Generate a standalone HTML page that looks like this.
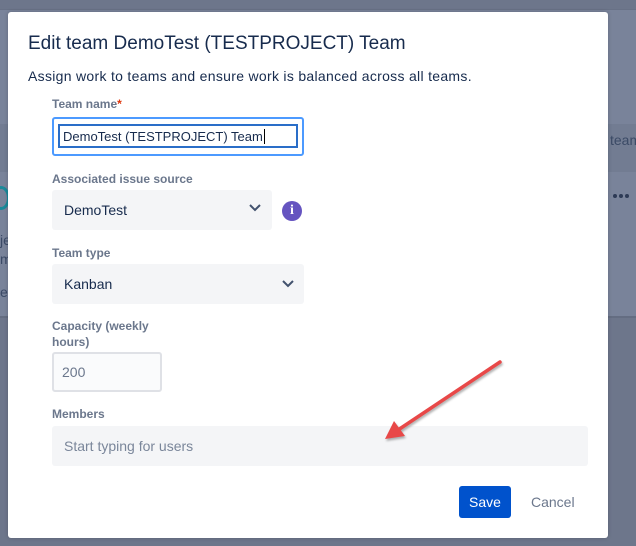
<!DOCTYPE html>
<html><head><meta charset="utf-8"><style>
*{margin:0;padding:0;box-sizing:border-box}
body{width:636px;height:546px;overflow:hidden;position:relative;background:#6d768b;font-family:"Liberation Sans",Arial,sans-serif}
.abs{position:absolute}
.lbl{position:absolute;left:52px;font-size:12px;font-weight:bold;color:#6b778c}
.sel{position:absolute;background:#f4f5f7;border-radius:3px;font-size:14px;color:#172b4d;padding-left:12px;display:flex;align-items:center}
</style></head><body>
<div class="abs" style="left:0;top:10px;width:636px;height:306px;background:#79839a"></div>
<div class="abs" style="left:0;top:9px;width:636px;height:1px;background:#687186"></div>
<div class="abs" style="left:0;top:124px;width:636px;height:48px;background:#727c92"></div>
<div class="abs" style="left:0;top:316px;width:636px;height:2px;background:#646d82"></div>
<div class="abs" style="left:610px;top:132px;font-size:14px;color:#3b4a66">team</div>
<div class="abs" style="left:613px;top:194px;width:4px;height:4px;border-radius:50%;background:#2d3a55;box-shadow:6px 0 #2d3a55,12px 0 #2d3a55"></div>
<div class="abs" style="left:-8px;top:186px;width:18px;height:24px;border-radius:50%;border:3px solid #1a8a9a"></div>
<div class="abs" style="left:0;top:232px;font-size:14px;color:#3b4a66">je</div>
<div class="abs" style="left:0;top:251px;font-size:14px;color:#3b4a66">m</div>
<div class="abs" style="left:0;top:284px;font-size:14px;color:#3b4a66">e</div>

<div class="abs" style="left:8px;top:12px;width:600px;height:526px;background:#fff;border-radius:3px;box-shadow:0 0 4px rgba(0,0,0,.2)"></div>
<div class="abs" style="left:28px;top:33px;font-size:19px;color:#172b4d">Edit team DemoTest (TESTPROJECT) Team</div>
<div class="abs" style="left:28px;top:68px;font-size:14px;color:#172b4d;letter-spacing:0.3px">Assign work to teams and ensure work is balanced across all teams.</div>

<div class="lbl" style="top:97px">Team name<span style="color:#de350b">*</span></div>
<div class="abs" style="left:52px;top:117px;width:252px;height:39px;border:2px solid #4c9aff;border-radius:3px;background:#fff"></div>
<div class="abs" style="left:58px;top:124px;width:240px;height:24px;border:2px solid #2a6ec8;font-size:13px;color:#172b4d;padding:2px 0 0 3px;line-height:17px">DemoTest (TESTPROJECT) Team<span style="border-left:1px solid #000;margin-left:1px"></span></div>

<div class="lbl" style="top:172px">Associated issue source</div>
<div class="sel" style="left:52px;top:190px;width:220px;height:40px">DemoTest</div>
<svg class="abs" style="left:248px;top:203px" width="14" height="10"><path d="M2 2l5 5 5-5" fill="none" stroke="#42526e" stroke-width="2"/></svg>
<div class="abs" style="left:282px;top:201px;width:20px;height:20px;border-radius:50%;background:#6554c0;color:#fff;font-size:14px;font-weight:bold;text-align:center;line-height:20px;font-family:'Liberation Serif',serif">i</div>

<div class="lbl" style="top:246px">Team type</div>
<div class="sel" style="left:52px;top:264px;width:252px;height:40px">Kanban</div>
<svg class="abs" style="left:281px;top:279px" width="14" height="10"><path d="M2 2l5 5 5-5" fill="none" stroke="#42526e" stroke-width="2"/></svg>

<div class="lbl" style="top:318px;line-height:16px">Capacity (weekly<br>hours)</div>
<div class="abs" style="left:52px;top:352px;width:110px;height:40px;border:2px solid #dfe1e6;border-radius:3px;background:#fafbfc;font-size:14px;color:#6b778c;padding:10px 0 0 8px">200</div>

<div class="lbl" style="top:407px">Members</div>
<div class="sel" style="left:52px;top:426px;width:536px;height:40px;color:#7a869a">Start typing for users</div>

<div class="abs" style="left:459px;top:486px;width:52px;height:32px;background:#0052cc;border-radius:3px;color:#fff;font-size:14px;text-align:center;line-height:32px">Save</div>
<div class="abs" style="left:531px;top:494px;font-size:14px;color:#6b778c">Cancel</div>

<svg class="abs" style="left:0;top:0" width="636" height="546"><g style="filter:drop-shadow(1px 2px 1px rgba(0,0,0,.3))"><line x1="500" y1="362" x2="398" y2="430" stroke="#e84848" stroke-width="3.5" stroke-linecap="round"/><path d="M385 439 L394 421 L405 436 Z" fill="#e84848"/></g></svg>
</body></html>
